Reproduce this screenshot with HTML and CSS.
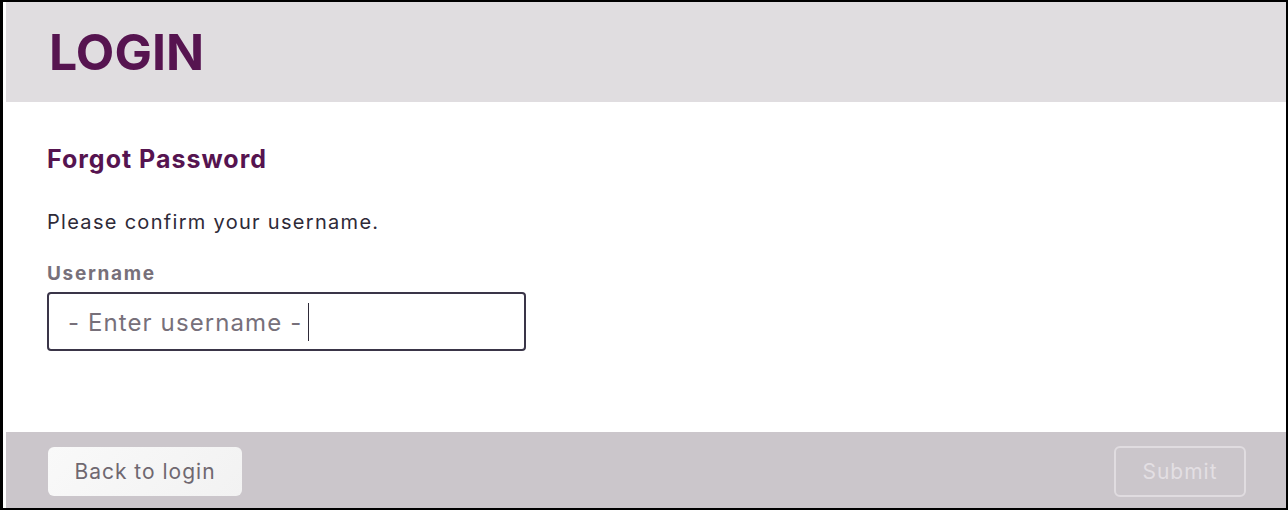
FILE: index.html
```html
<!DOCTYPE html>
<html>
<head>
<meta charset="utf-8">
<link rel="stylesheet" href="styles.css">
</head>
<body>
<div class="frame">
  <div class="panel">
    <header class="header">
      <h1 class="title">LOGIN</h1>
    </header>
    <main class="content">
      <h2 class="subtitle">Forgot Password</h2>
      <p class="intro">Please confirm your username.</p>
      <label class="label" for="user">Username</label>
      <div class="input">
        <span class="placeholder">- Enter username -</span><span class="caret"></span>
      </div>
    </main>
    <footer class="footer">
      <button class="btn btn-back">Back to login</button>
      <button class="btn btn-submit">Submit</button>
    </footer>
  </div>
</div>
</body>
</html>
```
FILE: styles.css
```css
* { box-sizing: border-box; }
html, body { margin: 0; padding: 0; }
body {
  background: #000;
  font-family: Inter, "Noto Sans", sans-serif;
}
.frame {
  width: 1288px;
  height: 510px;
  border-top: 2px solid #000;
  border-right: 2px solid #000;
  border-bottom: 2px solid #000;
  border-left: 3px solid #000;
  background: #fff;
  padding-left: 3px;
}
.panel {
  height: 100%;
  display: flex;
  flex-direction: column;
}
.header {
  height: 100px;
  background: #e0dde0;
  padding: 0 42px 0 43px;
  display: flex;
  align-items: center;
}
.title {
  margin: 0;
  font-size: 50px;
  font-weight: 700;
  color: #561450;
  line-height: 1;
}
.content {
  flex: 1;
  background: #fff;
  padding: 42px 41px 0;
}
.subtitle {
  margin: 0;
  font-size: 25px;
  font-weight: 700;
  color: #561450;
  line-height: 30px;
  letter-spacing: 1px;
}
.intro {
  margin: 36px 0 0;
  font-size: 20px;
  color: #2e2a38;
  line-height: 24px;
  letter-spacing: 1.3px;
}
.label {
  display: block;
  margin-top: 28px;
  font-size: 19px;
  font-weight: 700;
  color: #77707a;
  line-height: 24px;
  letter-spacing: 1.7px;
}
.input {
  margin-top: 6px;
  width: 479px;
  height: 59px;
  border: 2px solid #3a3548;
  border-radius: 4px;
  display: flex;
  align-items: center;
  padding-left: 19px;
}
.placeholder {
  font-size: 24px;
  color: #77707a;
  letter-spacing: 1.1px;
  padding-top: 2px;
}
.caret {
  width: 1px;
  height: 38px;
  background: #2e2a38;
  margin-left: 6px;
}
.footer {
  height: 76px;
  background: #cbc6cb;
  display: flex;
  align-items: center;
  justify-content: space-between;
  padding: 3px 40px 0 42px;
}
.btn {
  font-family: Inter, "Noto Sans", sans-serif;
  font-size: 21px;
  height: 49px;
  border-radius: 6px;
  cursor: pointer;
  letter-spacing: 1px;
}
.btn-back {
  width: 194px;
  background: linear-gradient(135deg, #f9f9f9, #f2f2f2);
  border: none;
  color: #6f6870;
}
.btn-submit {
  width: 132px;
  height: 51px;
  background: transparent;
  border: 2px solid #e0dce0;
  color: #e3dfe3;
}
```
